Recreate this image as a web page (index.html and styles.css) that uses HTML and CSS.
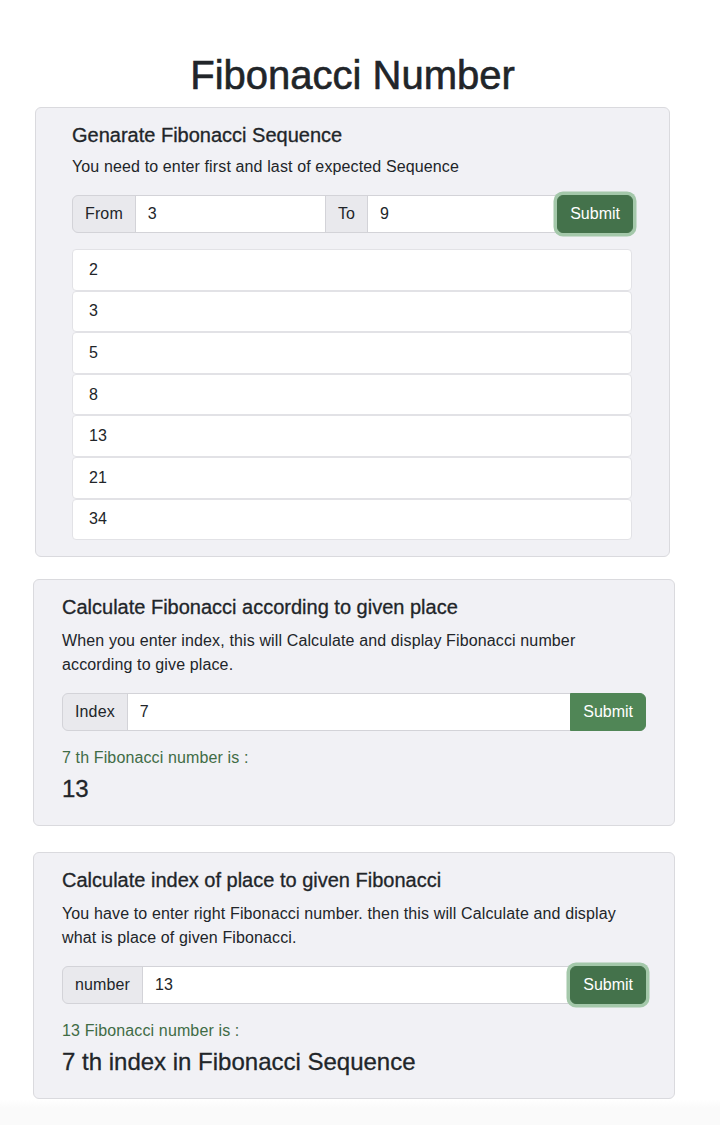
FILE: index.html
```html
<!DOCTYPE html>
<html lang="en">
<head>
<meta charset="utf-8">
<title>Fibonacci Number</title>
<link rel="stylesheet" href="styles.css">
</head>
<body>
<div class="page">
  <h1 class="title">Fibonacci Number</h1>

  <section class="card card-seq">
    <h5 class="card-title">Genarate Fibonacci Sequence</h5>
    <p class="card-text">You need to enter first and last of expected Sequence</p>
    <div class="input-group">
      <span class="addon">From</span>
      <input class="field" type="text" value="3">
      <span class="addon addon-mid">To</span>
      <input class="field" type="text" value="9">
      <button class="btn btn-focus">Submit</button>
    </div>
    <ul class="list">
      <li class="list-item">2</li>
      <li class="list-item">3</li>
      <li class="list-item">5</li>
      <li class="list-item">8</li>
      <li class="list-item">13</li>
      <li class="list-item">21</li>
      <li class="list-item">34</li>
    </ul>
  </section>

  <section class="card card-wide card-gap">
    <h5 class="card-title">Calculate Fibonacci according to given place</h5>
    <p class="card-text">When you enter index, this will Calculate and display Fibonacci number according to give place.</p>
    <div class="input-group">
      <span class="addon">Index</span>
      <input class="field" type="text" value="7">
      <button class="btn">Submit</button>
    </div>
    <p class="result-label">7 th Fibonacci number is :</p>
    <h4 class="result">13</h4>
  </section>

  <section class="card card-wide">
    <h5 class="card-title">Calculate index of place to given Fibonacci</h5>
    <p class="card-text">You have to enter right Fibonacci number. then this will Calculate and display what is place of given Fibonacci.</p>
    <div class="input-group">
      <span class="addon">number</span>
      <input class="field" type="text" value="13">
      <button class="btn btn-focus">Submit</button>
    </div>
    <p class="result-label">13 Fibonacci number is :</p>
    <h4 class="result">7 th index in Fibonacci Sequence</h4>
  </section>
</div>
<div class="footer-band"></div>
</body>
</html>
```

FILE: styles.css
```css
* {
  box-sizing: border-box;
}

html, body {
  margin: 0;
  padding: 0;
  background: #ffffff;
}

body {
  font-family: "Liberation Sans", Arial, sans-serif;
  font-size: 16px;
  line-height: 24px;
  color: #212529;
  letter-spacing: 0.13px;
}

.page {
  width: 642px;
  margin-left: 33px;
  padding-top: 51px;
}

.title {
  margin: 0 0 8px;
  font-size: 40px;
  line-height: 48px;
  font-weight: 500;
  text-align: center;
  color: #212529;
  padding-right: 3px;
  letter-spacing: 0;
  -webkit-text-stroke: 0.6px #212529;
}

.card {
  background: #f1f1f5;
  border: 1px solid #dadade;
  border-radius: 6px;
}

.card-seq {
  margin: 0 5px 22px 2px;
  padding: 15px 36px 16px 36px;
}

.card-wide {
  padding: 15px 28px 16px 28px;
}

.card-gap {
  margin-bottom: 26px;
}

.card-title {
  margin: 0 0 8px;
  font-size: 20px;
  line-height: 24px;
  font-weight: 500;
  letter-spacing: 0;
  -webkit-text-stroke: 0.3px #212529;
}

.card-wide .card-title {
  margin-bottom: 10px;
}

.card-text {
  margin: 0 0 16px;
}

.input-group {
  display: flex;
  align-items: stretch;
  width: 100%;
}

.addon {
  display: flex;
  align-items: center;
  padding: 6px 12px;
  line-height: 24px;
  background: #e9e9ed;
  border: 1px solid #d3d3d8;
  border-radius: 6px 0 0 6px;
  color: #212529;
  white-space: nowrap;
}

.addon-mid {
  border-radius: 0;
  margin-left: -1px;
}

.field {
  flex: 1 1 auto;
  min-width: 0;
  margin-left: -1px;
  padding: 6px 12px;
  font: inherit;
  line-height: 24px;
  color: #212529;
  background: #ffffff;
  border: 1px solid #d3d3d8;
  border-radius: 0;
  outline: none;
}

.btn {
  position: relative;
  margin-left: -1px;
  padding: 6px 12px;
  font: inherit;
  line-height: 24px;
  color: #ffffff;
  background: #508656;
  border: 1px solid #508656;
  border-radius: 0 6px 6px 0;
  cursor: pointer;
}

.btn-focus {
  background: #44724b;
  border-color: #44724b;
  border-radius: 6px;
  box-shadow: 0 0 0 3.5px #a4c8aa;
  z-index: 1;
}

.list {
  list-style: none;
  margin: 16px 0 0;
  padding: 0 1px 0 0;
}

.list-item {
  padding: 7.8px 16px;
  line-height: 24px;
  background: #ffffff;
  border: 1px solid #e2e2e6;
  border-radius: 4px;
}

.result-label {
  margin: 15px 0 5px;
  color: #3f6c45;
}

.result {
  margin: 0 0 5px;
  font-size: 24px;
  line-height: 28.8px;
  font-weight: 500;
  letter-spacing: 0;
  -webkit-text-stroke: 0.3px #212529;
}

.footer-band {
  height: 26px;
  margin-top: 0;
  background: linear-gradient(to bottom, #ffffff 0%, #fafafa 35%, #fafafa 100%);
}
```
